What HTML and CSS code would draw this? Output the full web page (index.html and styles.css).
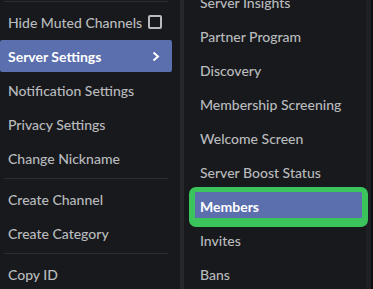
FILE: index.html
```html
<!DOCTYPE html>
<html lang="en">
<head>
    <meta charset="UTF-8">
    <title>Server Menu</title>
    <link rel="stylesheet" href="styles.css">
</head>
<body>
    <div class="screen">
        <div class="menu menu-main">
            <div class="separator"></div>
            <div class="item">
                <span>Hide Muted Channels</span>
                <span class="checkbox"></span>
            </div>
            <div class="item active">
                <span>Server Settings</span>
                <svg class="chevron" width="16" height="16" viewBox="0 0 16 16">
                    <polyline points="5.5,4.5 10,8.5 5.5,12.5" fill="none" stroke="#fff" stroke-width="2"/>
                </svg>
            </div>
            <div class="item"><span>Notification Settings</span></div>
            <div class="item"><span>Privacy Settings</span></div>
            <div class="item"><span>Change Nickname</span></div>
            <div class="separator"></div>
            <div class="item"><span>Create Channel</span></div>
            <div class="item"><span>Create Category</span></div>
            <div class="separator"></div>
            <div class="item"><span>Copy ID</span></div>
        </div>

        <div class="divider"></div>

        <div class="menu menu-sub">
            <div class="item"><span>Server Insights</span></div>
            <div class="item"><span>Partner Program</span></div>
            <div class="item"><span>Discovery</span></div>
            <div class="item"><span>Membership Screening</span></div>
            <div class="item"><span>Welcome Screen</span></div>
            <div class="item"><span>Server Boost Status</span></div>
            <div class="item active marked">
                <span>Members</span>
                <div class="mark"></div>
            </div>
            <div class="item"><span>Invites</span></div>
            <div class="item"><span>Bans</span></div>
        </div>

        <div class="scroll-strip"></div>
        <div class="edge"></div>
    </div>
</body>
</html>
```

FILE: styles.css
```css
/* Page */
body {
    margin: 0;
    background-color: #18191c;
    font-family: Lato, "Noto Sans", sans-serif;
    overflow: hidden;
}

.screen {
    display: flex;
    height: 289px;
    overflow: hidden;
}

/* Menus */
.menu {
    background-color: #18191c;
}

.menu-main {
    width: 172px;
    padding-right: 8px;
}

.menu-sub {
    width: 170px;
    padding: 0 4px 0 8px;
    margin-top: -16px;
}

.item {
    position: relative;
    display: flex;
    align-items: center;
    justify-content: space-between;
    height: 32px;
    padding: 0 8px;
    margin: 2px 0;
    border-radius: 2px;
    color: #b9bbbe;
    font-size: 14px;
    font-weight: 500;
    white-space: nowrap;
}

.item.active {
    background-color: #5b6eae;
    color: #ffffff;
    font-weight: 700;
}

.separator {
    height: 1px;
    margin: 1px 4px 4px;
    background-color: #2c2e33;
}

.separator + .item,
.item + .separator {
    margin-top: 4px;
}

.item + .separator {
    margin-bottom: 4px;
}

/* Checkbox */
.checkbox {
    width: 10px;
    height: 10px;
    border: 2px solid #b9bbbe;
    border-radius: 2px;
    margin-right: 2px;
}

.chevron {
    flex-shrink: 0;
}

/* Column divider between menus */
.divider {
    width: 4px;
    background-color: #26282c;
}

.scroll-strip {
    width: 5px;
    background-color: #1f2023;
}

.edge {
    flex: 1;
    background-color: #0e0f11;
}

/* Green annotation box */
.mark {
    position: absolute;
    left: -3px;
    top: -3px;
    width: 167px;
    height: 26px;
    border-style: solid;
    border-color: #3bc45b;
    border-width: 5px 6px 9px 6px;
    border-radius: 7px;
}
```
